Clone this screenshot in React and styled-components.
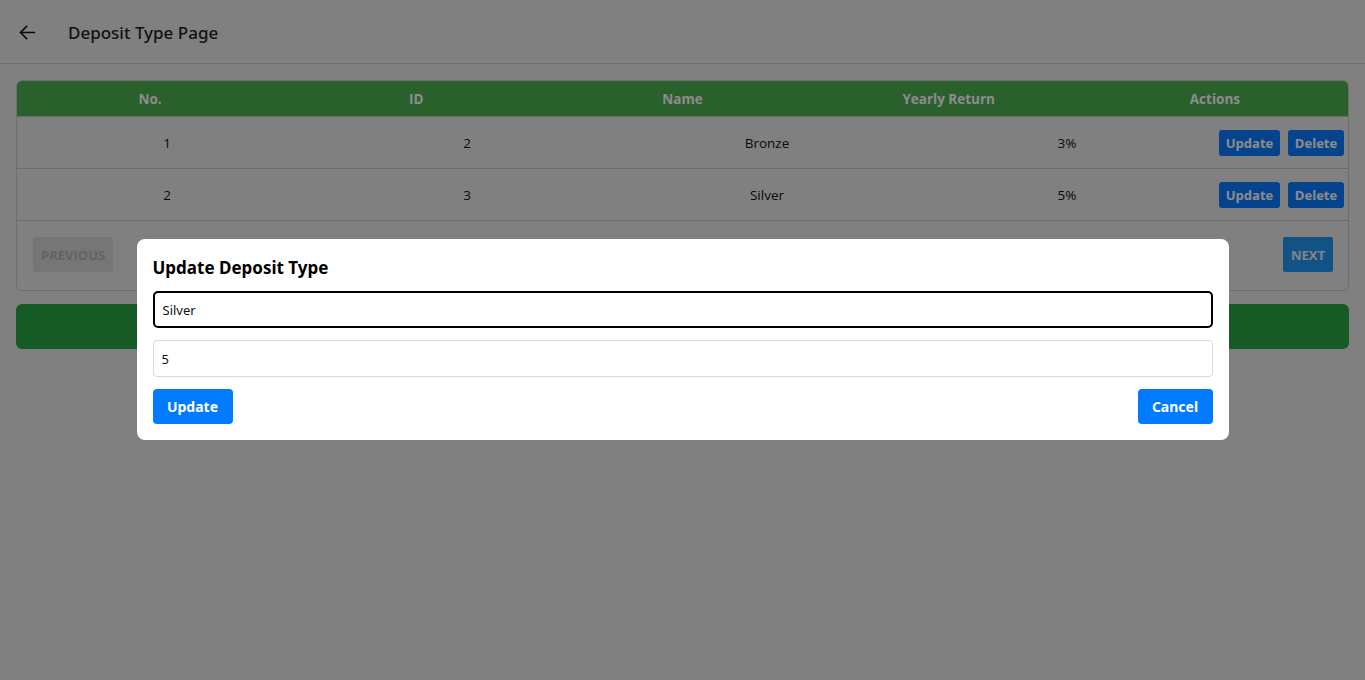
import styled, { createGlobalStyle } from 'styled-components';

const GlobalStyle = createGlobalStyle`
  html, body {
    margin: 0;
    padding: 0;
    background: #e9e9e9;
    font-family: "Noto Sans", "Open Sans", sans-serif;
    color: #1c1c1c;
  }
  * { box-sizing: border-box; }
`;

const Page = styled.div`
  min-height: 680px;
  background: #e9e9e9;
`;

const TopBar = styled.header`
  height: 64px;
  display: flex;
  align-items: center;
  gap: 30px;
  padding: 1px 16px 0;
  border-bottom: 1px solid #c6c6c6;
`;

const BackButton = styled.button`
  display: flex;
  align-items: center;
  justify-content: center;
  width: 22px;
  height: 22px;
  padding: 0;
  border: 0;
  background: none;
  color: #111;
`;

const PageTitle = styled.h1`
  margin: 0;
  font-size: 17px;
  font-weight: 500;
  color: #222;
`;

const Content = styled.main`
  padding: 16px 16px;
  display: flex;
  flex-direction: column;
  gap: 13px;
`;

const TableCard = styled.section`
  border: 1px solid #c8c8c8;
  border-radius: 6px;
  overflow: hidden;
  font-family: "Open Sans", sans-serif;
`;

const HeadRow = styled.div`
  display: grid;
  grid-template-columns: repeat(5, 1fr);
  height: 35px;
  align-items: center;
  background: #4caf50;
  color: #fff;
  font-size: 13.5px;
  font-weight: 700;
  text-align: center;
`;

const BodyRow = styled.div`
  display: grid;
  grid-template-columns: 300px 300px 300px 300px 1fr;
  height: 52px;
  align-items: center;
  border-top: 1px solid #c2c2c2;
  font-size: 13.5px;
  color: #111;
  text-align: center;
`;

const Actions = styled.div`
  display: flex;
  justify-content: flex-end;
  gap: 8px;
  padding-right: 4px;
`;

const SmallButton = styled.button`
  height: 26px;
  width: ${({ $w }) => $w}px;
  border: 0;
  border-radius: 3px;
  background: #0a7cff;
  color: #fff;
  font-family: inherit;
  font-size: 13px;
  font-weight: 700;
`;

const Pager = styled.div`
  display: flex;
  justify-content: space-between;
  align-items: flex-start;
  border-top: 1px solid #c2c2c2;
  padding: 16px 15px 0 16px;
  height: 70px;
`;

const PagerButton = styled.button`
  height: 35px;
  padding: 0 8px;
  border: 0;
  border-radius: 2px;
  background: ${({ $disabled }) => ($disabled ? '#d8d8d8' : '#2196f3')};
  color: ${({ $disabled }) => ($disabled ? '#b4b4b4' : '#f0f0f0')};
  font-family: "Open Sans", sans-serif;
  font-size: 13px;
  font-weight: 700;
`;

const GreenBar = styled.div`
  height: 45px;
  border-radius: 6px;
  background: #28a745;
`;

const Overlay = styled.div`
  position: fixed;
  inset: 0;
  background: rgba(0, 0, 0, 0.45);
  display: flex;
  justify-content: center;
  align-items: flex-start;
  padding-top: 239px;
`;

const Modal = styled.div`
  width: 1092px;
  background: #fff;
  border-radius: 8px;
  padding: 16px;
  display: flex;
  flex-direction: column;
  gap: 12px;
`;

const ModalTitle = styled.h2`
  margin: 0;
  height: 24px;
  padding-top: 2px;
  line-height: 22px;
  font-size: 17px;
  font-weight: 700;
  color: #000;
`;

const Field = styled.input`
  height: 37px;
  width: 100%;
  padding: 0 8px;
  border: ${({ $focused }) => ($focused ? '2px solid #000' : '1px solid #dadada')};
  border-radius: ${({ $focused }) => ($focused ? '5px' : '4px')};
  font-family: "Noto Sans", sans-serif;
  font-size: 13px;
  color: #111;
  outline: none;
`;

const ModalActions = styled.div`
  display: flex;
  justify-content: space-between;
`;

const ModalButton = styled.button`
  height: 35px;
  width: ${({ $w }) => $w}px;
  border: 0;
  border-radius: 4px;
  background: #007bff;
  color: #fff;
  font-family: "Noto Sans", sans-serif;
  font-size: 14px;
  font-weight: 700;
`;

const rows = [
  { no: 1, id: 2, name: 'Bronze', ret: '3%' },
  { no: 2, id: 3, name: 'Silver', ret: '5%' },
];

function BackArrow() {
  return (
    <svg width="21" height="21" viewBox="0 0 24 24" fill="none" stroke="currentColor" strokeWidth="1.8" strokeLinecap="round" strokeLinejoin="round">
      <path d="M20 12H4" />
      <path d="M11 5l-7 7 7 7" />
    </svg>
  );
}

export default function App() {
  return (
    <>
      <GlobalStyle />
      <Page>
        <TopBar>
          <BackButton aria-label="Back">
            <BackArrow />
          </BackButton>
          <PageTitle>Deposit Type Page</PageTitle>
        </TopBar>
        <Content>
          <TableCard>
            <HeadRow>
              <div>No.</div>
              <div>ID</div>
              <div>Name</div>
              <div>Yearly Return</div>
              <div>Actions</div>
            </HeadRow>
            {rows.map((r) => (
              <BodyRow key={r.id}>
                <div>{r.no}</div>
                <div>{r.id}</div>
                <div>{r.name}</div>
                <div>{r.ret}</div>
                <Actions>
                  <SmallButton $w={61}>Update</SmallButton>
                  <SmallButton $w={56}>Delete</SmallButton>
                </Actions>
              </BodyRow>
            ))}
            <Pager>
              <PagerButton $disabled>PREVIOUS</PagerButton>
              <PagerButton>NEXT</PagerButton>
            </Pager>
          </TableCard>
          <GreenBar />
        </Content>
        <Overlay>
          <Modal>
            <ModalTitle>Update Deposit Type</ModalTitle>
            <Field $focused defaultValue="Silver" />
            <Field defaultValue="5" />
            <ModalActions>
              <ModalButton $w={80}>Update</ModalButton>
              <ModalButton $w={75}>Cancel</ModalButton>
            </ModalActions>
          </Modal>
        </Overlay>
      </Page>
    </>
  );
}
